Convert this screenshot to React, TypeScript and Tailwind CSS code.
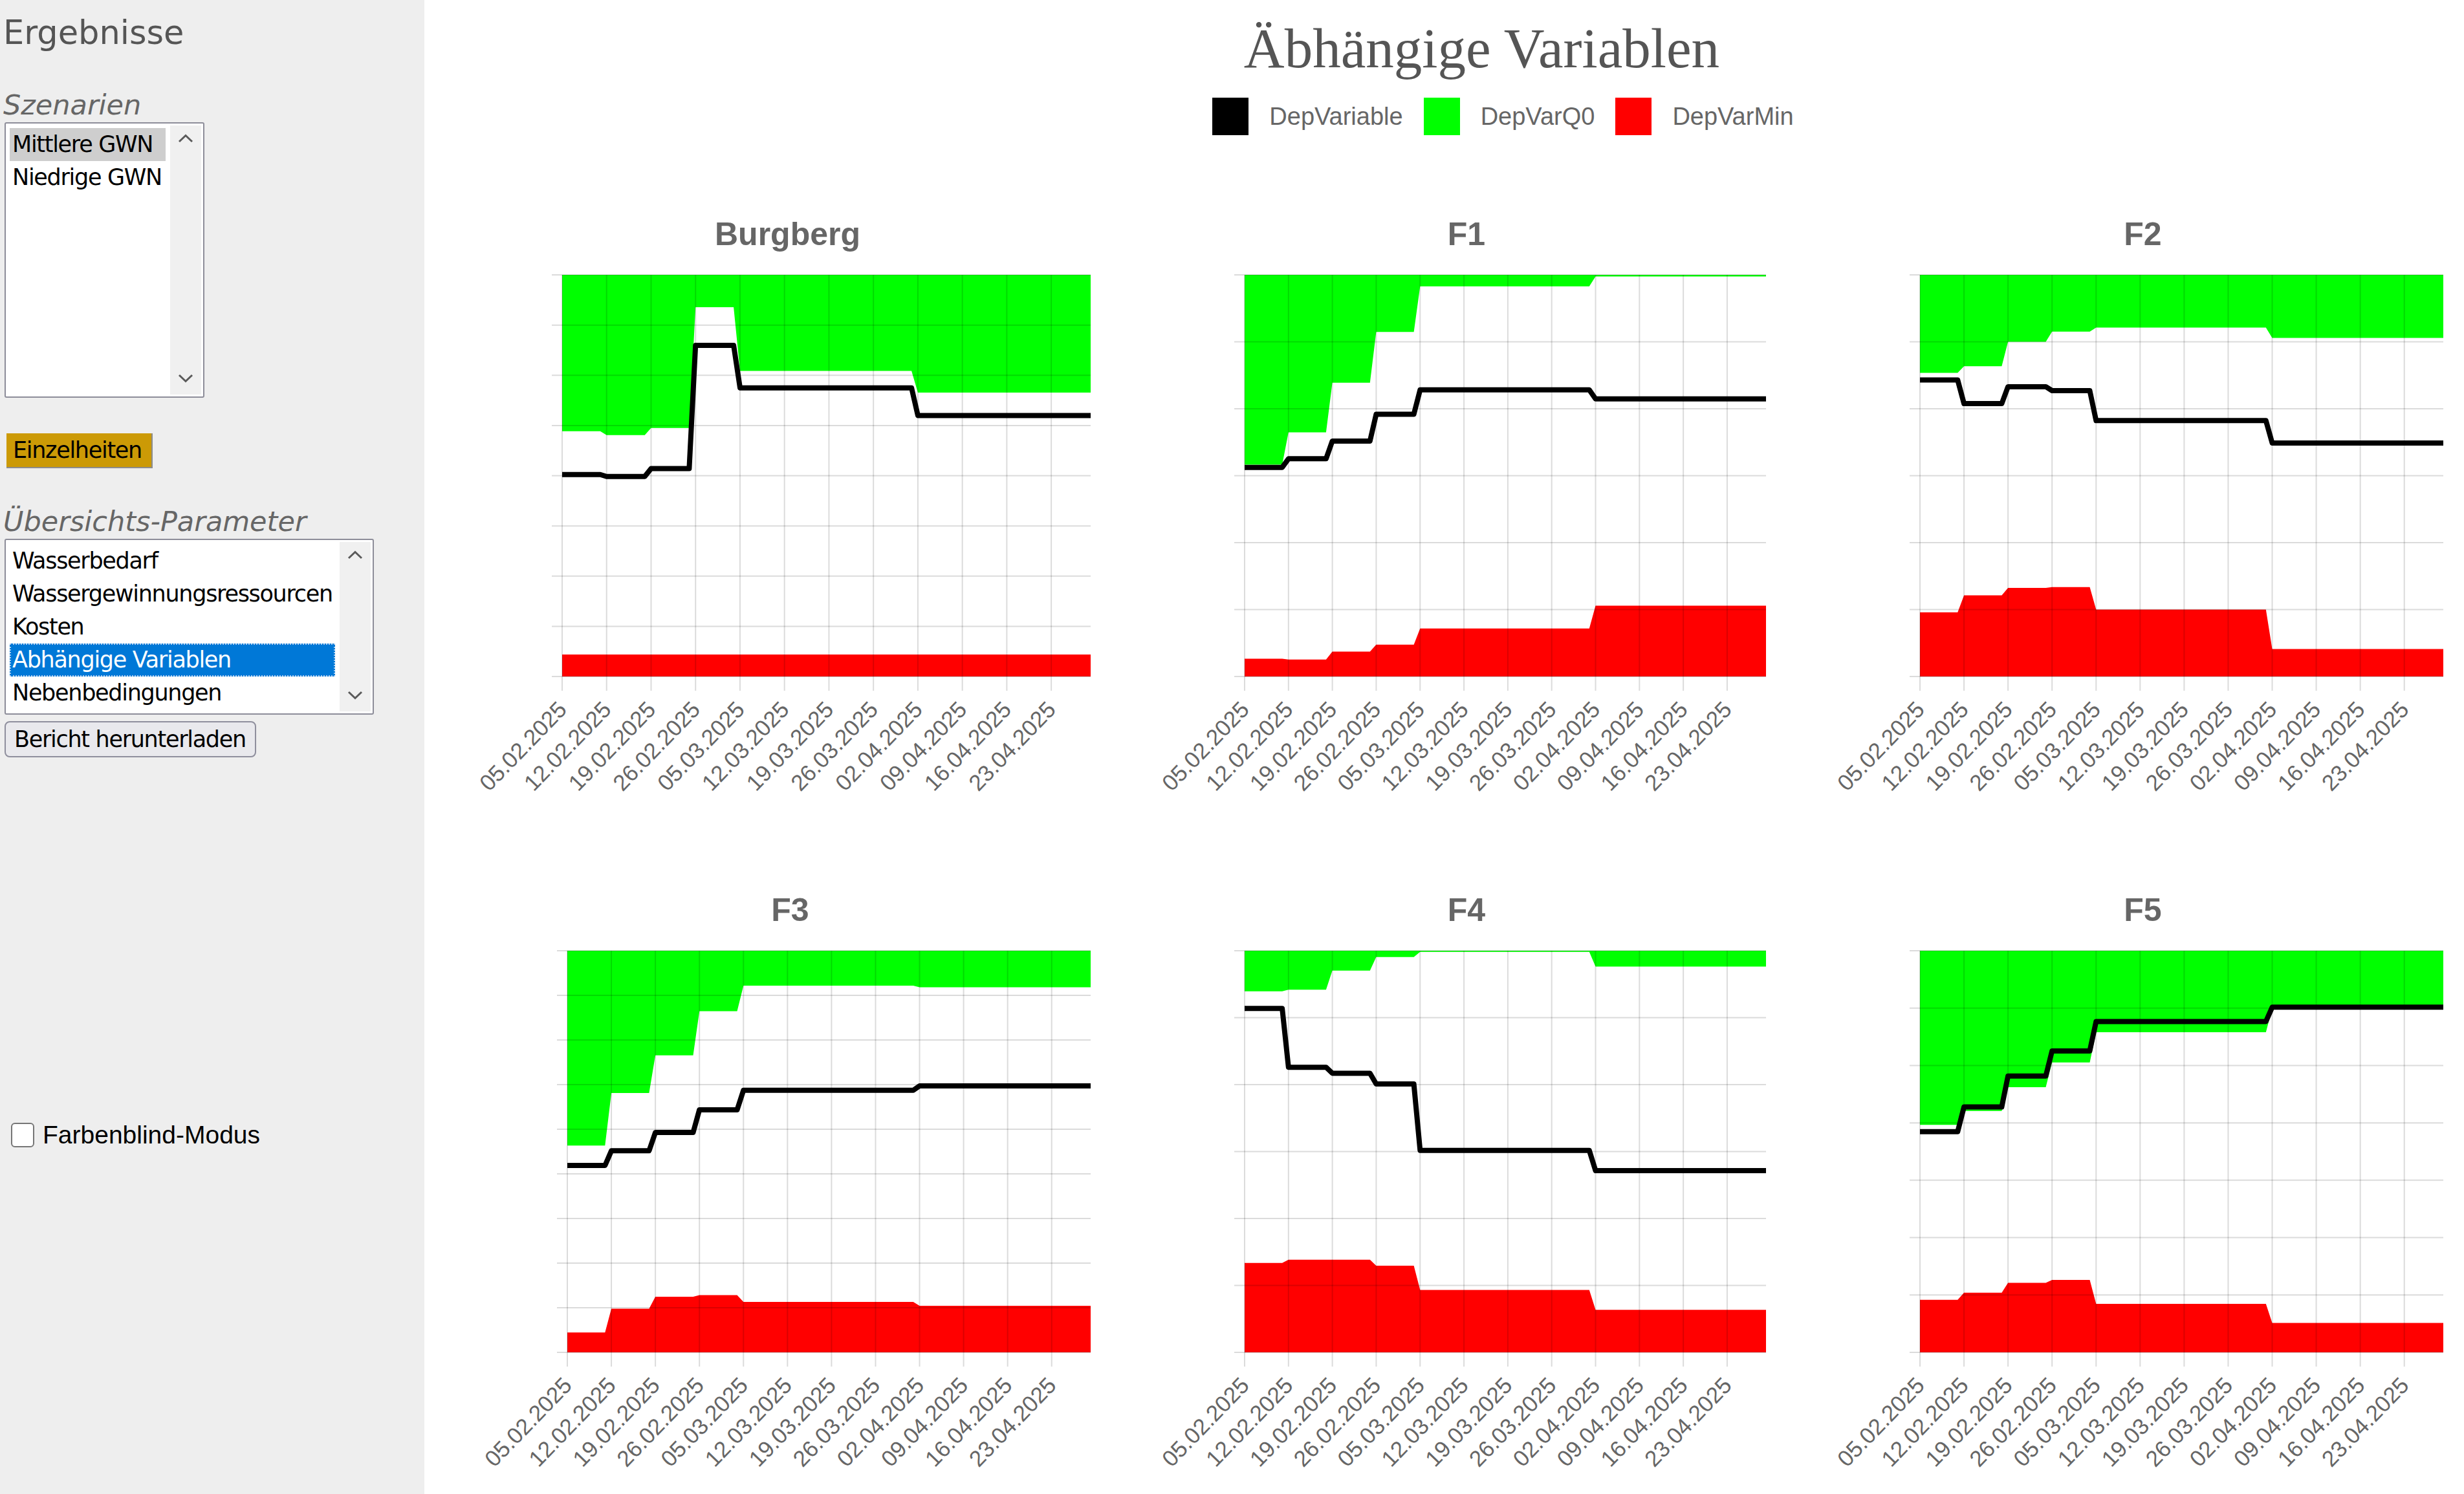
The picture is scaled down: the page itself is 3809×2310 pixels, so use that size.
import React from "react";

// Weekly tick dates on the time axis
const DATES = [
  "05.02.2025",
  "12.02.2025",
  "19.02.2025",
  "26.02.2025",
  "05.03.2025",
  "12.03.2025",
  "19.03.2025",
  "26.03.2025",
  "02.04.2025",
  "09.04.2025",
  "16.04.2025",
  "23.04.2025",
];

const SPAN_DAYS = 83.2;
const CELL_W = 1051;
const CELL_H = 1045;
const PLOT_TOP = 115;
const PLOT_BOTTOM = 736;

interface Chart {
  name: string;
  left: number;
  right: number;
  // data values are given on a 0..scale grid where refTop/refBottom are the plot limits
  refTop: number;
  refBottom: number;
  q0: number[];
  dep: number[];
  min: number[];
  yDiv: number;
}

const rep = (v: number, n: number) => Array.from({ length: n }, () => v);

const CHARTS: Chart[] = [
  {
    name: "Burgberg",
    left: 213,
    right: 1030,
    refTop: 208,
    refBottom: 1228,
    q0: [605, 615, 597, 290, ...rep(452, 4), ...rep(507, 4)],
    dep: [715, 720, 700, 387, ...rep(495, 4), ...rep(565, 4)],
    min: rep(1172, 12),
    yDiv: 8,
  },
  {
    name: "F1",
    left: 217,
    right: 1023,
    refTop: 208,
    refBottom: 1228,
    q0: [690, 608, 482, 353, ...rep(237, 4), ...rep(212, 4)],
    dep: [697, 675, 630, 562, ...rep(500, 4), ...rep(523, 4)],
    min: [1183, 1185, 1165, 1147, ...rep(1106, 4), ...rep(1048, 4)],
    yDiv: 6,
  },
  {
    name: "F2",
    left: 210,
    right: 1019,
    refTop: 208,
    refBottom: 1228,
    q0: [457, 440, 378, 352, ...rep(342, 4), ...rep(368, 4)],
    dep: [475, 535, 492, 502, ...rep(578, 4), ...rep(635, 4)],
    min: [1065, 1022, 1003, 1001, ...rep(1058, 4), ...rep(1158, 4)],
    yDiv: 6,
  },
  {
    name: "F3",
    left: 221,
    right: 1030,
    refTop: 200,
    refBottom: 1210,
    q0: [690, 558, 463, 352, ...rep(288, 4), ...rep(292, 4)],
    dep: [740, 703, 657, 600, ...rep(551, 4), ...rep(540, 4)],
    min: [1160, 1100, 1070, 1066, ...rep(1083, 4), ...rep(1093, 4)],
    yDiv: 9,
  },
  {
    name: "F4",
    left: 217,
    right: 1023,
    refTop: 200,
    refBottom: 1210,
    q0: [302, 298, 250, 216, ...rep(203, 4), ...rep(240, 4)],
    dep: [345, 493, 508, 535, ...rep(702, 4), ...rep(753, 4)],
    min: [985, 977, 977, 992, ...rep(1053, 4), ...rep(1103, 4)],
    yDiv: 6,
  },
  {
    name: "F5",
    left: 210,
    right: 1019,
    refTop: 200,
    refBottom: 1210,
    q0: [638, 603, 543, 481, ...rep(405, 4), ...rep(345, 4)],
    dep: [655, 593, 515, 452, ...rep(378, 4), ...rep(342, 4)],
    min: [1078, 1060, 1035, 1028, ...rep(1088, 4), ...rep(1136, 4)],
    yDiv: 7,
  },
];

function toX(c: Chart, day: number) {
  return c.left + (day / SPAN_DAYS) * (c.right - c.left);
}

function toY(c: Chart, v: number) {
  return PLOT_TOP + ((v - c.refTop) / (c.refBottom - c.refTop)) * (PLOT_BOTTOM - PLOT_TOP);
}

// Daily series holding a weekly value, switching over one day at each week boundary
function stepPoints(c: Chart, s: number[]): [number, number][] {
  const pts: [number, number][] = [];
  s.forEach((v, k) => {
    const start = k === 0 ? 0 : 7 * k;
    const end = k === s.length - 1 ? SPAN_DAYS : 7 * k + 6;
    pts.push([toX(c, start), toY(c, v)], [toX(c, end), toY(c, v)]);
  });
  return pts;
}

const fmt = (pts: [number, number][]) => pts.map(([x, y]) => `${x.toFixed(1)},${y.toFixed(1)}`).join(" ");

function ChartPanel({ c }: { c: Chart }) {
  const q0 = stepPoints(c, c.q0);
  const dep = stepPoints(c, c.dep);
  const min = stepPoints(c, c.min);
  const green: [number, number][] = [[c.left, PLOT_TOP], [c.right, PLOT_TOP], ...q0.slice().reverse()];
  const red: [number, number][] = [...min, [c.right, PLOT_BOTTOM], [c.left, PLOT_BOTTOM]];
  const grid = "rgba(0,0,0,0.14)";
  const hLines = Array.from({ length: c.yDiv + 1 }, (_, i) => PLOT_TOP + (i * (PLOT_BOTTOM - PLOT_TOP)) / c.yDiv);

  return (
    <svg width={CELL_W} height={CELL_H} className="block">
      <text
        x={(c.left + c.right) / 2 - 60}
        y={69}
        textAnchor="middle"
        fontFamily="'Liberation Sans', Arial, sans-serif"
        fontWeight={700}
        fontSize={50}
        fill="#666666"
      >
        {c.name}
      </text>
      <polygon points={fmt(green)} fill="#00ff00" />
      <polygon points={fmt(red)} fill="#ff0000" />
      {hLines.map((y, i) => (
        <line key={`h${i}`} x1={c.left - 16} x2={c.right} y1={y} y2={y} stroke={grid} strokeWidth={2} />
      ))}
      {DATES.map((d, i) => {
        const x = toX(c, 7 * i);
        return (
          <g key={d}>
            <line x1={x} x2={x} y1={PLOT_TOP} y2={PLOT_BOTTOM + 22} stroke={grid} strokeWidth={2} />
            <text
              transform={`translate(${x + 9},${PLOT_BOTTOM + 53}) rotate(-46)`}
              textAnchor="end"
              fontFamily="'Liberation Sans', Arial, sans-serif"
              fontSize={35}
              fill="#666666"
            >
              {d}
            </text>
          </g>
        );
      })}
      <polyline points={fmt(dep)} fill="none" stroke="#000000" strokeWidth={8} strokeLinejoin="round" />
    </svg>
  );
}

function ChevronUp() {
  return (
    <svg width="24" height="14" viewBox="0 0 24 14">
      <path d="M2 12 L12 2.5 L22 12" stroke="#5a5a5a" strokeWidth="3" fill="none" />
    </svg>
  );
}

function ChevronDown() {
  return (
    <svg width="24" height="14" viewBox="0 0 24 14">
      <path d="M2 2 L12 11.5 L22 2" stroke="#5a5a5a" strokeWidth="3" fill="none" />
    </svg>
  );
}

function ScrollTrack() {
  return (
    <div className="my-[3px] mr-[3px] flex w-[48px] flex-col items-center justify-between bg-[#f0f0f0] pt-[13px] pb-[18px]">
      <ChevronUp />
      <ChevronDown />
    </div>
  );
}

const OVERVIEW = ["Wasserbedarf", "Wassergewinnungsressourcen", "Kosten", "Abhängige Variablen", "Nebenbedingungen"];

export default function App() {
  return (
    <div className="flex h-[2310px] w-[3809px] overflow-hidden bg-white">
      <aside className="flex h-full w-[656px] shrink-0 flex-col bg-[#eeeeee] pl-[7px] font-['DejaVu_Sans',sans-serif]">
        <h2 className="-ml-[2px] mt-[25px] text-[51px] leading-none text-[#555555]">Ergebnisse</h2>

        <div className="-ml-[2px] mt-[65px] text-[43px] italic leading-none text-[#666666]">Szenarien</div>
        <div className="mt-[5px] flex h-[426px] w-[309px] rounded-[3px] border-2 border-[#8d8d99] bg-white">
          <div className="flex-1 pl-[6px] pr-[7px] pt-[7px] text-[35px] tracking-[-1.3px] text-black">
            <div className="h-[51px] bg-[#cecece] pl-[4px] leading-[51px]">Mittlere GWN</div>
            <div className="h-[51px] pl-[4px] leading-[51px]">Niedrige GWN</div>
          </div>
          <ScrollTrack />
        </div>

        <button className="ml-[3px] mt-[55px] h-[54px] w-[226px] border-b-2 border-r-2 border-[#8c8c8c] bg-[#cc9a06] pl-[10px] text-left text-[35px] leading-none tracking-[-1.3px] text-black">
          Einzelheiten
        </button>

        <div className="-ml-[2px] mt-[61px] text-[43px] italic leading-none text-[#666666]">Übersichts-Parameter</div>
        <div className="mt-[5px] flex h-[272px] w-[571px] rounded-[3px] border-2 border-[#8d8d99] bg-white">
          <div className="flex-1 pl-[6px] pr-[7px] pt-[7px] text-[35px] tracking-[-1.3px] text-black">
            {OVERVIEW.map((o) =>
              o === "Abhängige Variablen" ? (
                <div
                  key={o}
                  className="h-[51px] bg-[#0078d7] pl-[4px] leading-[51px] text-white outline-2 -outline-offset-2 outline-dotted outline-[#a9cdf0]"
                >
                  {o}
                </div>
              ) : (
                <div key={o} className="h-[51px] pl-[4px] leading-[51px]">
                  {o}
                </div>
              )
            )}
          </div>
          <ScrollTrack />
        </div>

        <button className="mt-[10px] h-[56px] w-[389px] rounded-[8px] border-2 border-[#8f8f9d] bg-[#e9e9ed] pl-[13px] text-left text-[35px] leading-none tracking-[-1.3px] text-black">
          Bericht herunterladen
        </button>

        <label className="ml-[10px] mt-[564px] flex items-center">
          <span className="h-[38px] w-[36px] rounded-[6px] border-2 border-[#767676] bg-white" />
          <span className="ml-[13px] font-['Liberation_Sans',Arial,sans-serif] text-[39px] leading-none text-black">
            Farbenblind-Modus
          </span>
        </label>
      </aside>

      <main className="flex min-w-0 flex-1 flex-col">
        <div className="flex justify-center pl-[116px] pt-[31px]">
          <h1 className="font-['Liberation_Serif',serif] text-[87px] leading-none text-[#555555]">Äbhängige Variablen</h1>
        </div>
        <div className="mt-[33px] flex justify-center pl-[182px]">
          <div className="flex items-center font-['Liberation_Sans',Arial,sans-serif] text-[38px] leading-none text-[#666666]">
            <span className="h-[58px] w-[56px] bg-black" />
            <span className="ml-[32px]">DepVariable</span>
            <span className="ml-[32px] h-[58px] w-[56px] bg-[#00ff00]" />
            <span className="ml-[32px]">DepVarQ0</span>
            <span className="ml-[32px] h-[58px] w-[56px] bg-[#ff0000]" />
            <span className="ml-[32px]">DepVarMin</span>
          </div>
        </div>
        <div className="mt-[101px] grid grid-cols-3">
          {CHARTS.map((c) => (
            <ChartPanel key={c.name} c={c} />
          ))}
        </div>
      </main>
    </div>
  );
}
